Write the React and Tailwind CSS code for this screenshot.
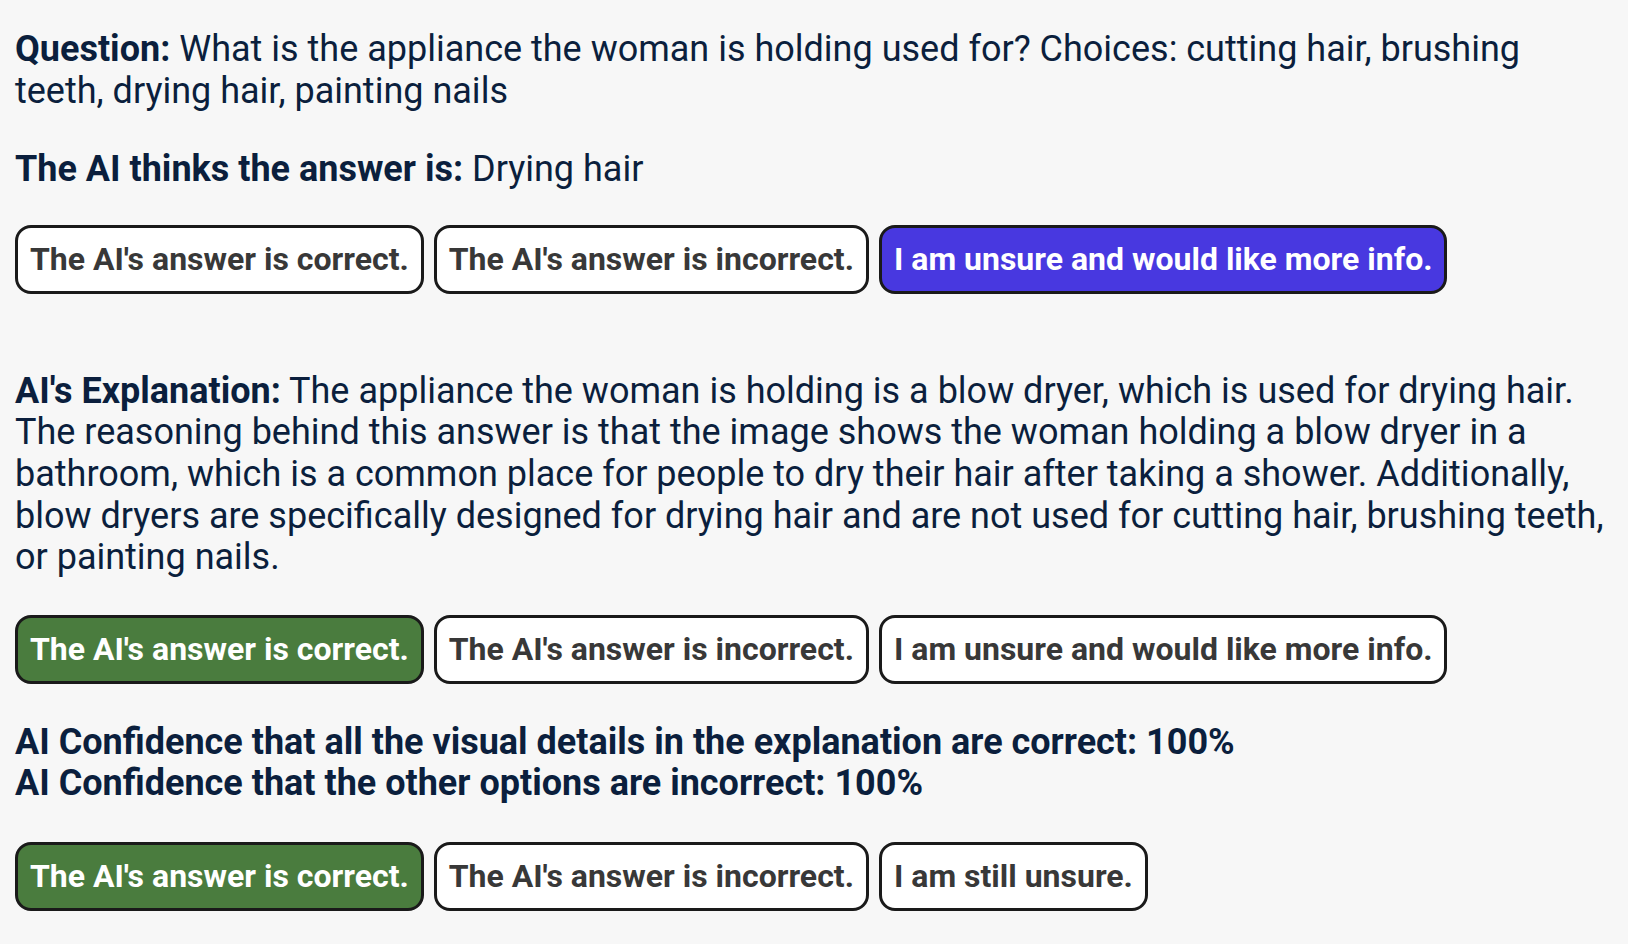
import React from 'react';

const btnBase =
    'h-[69px] flex items-center px-[12px] border-[3px] border-[#1a1a1a] rounded-[16px] text-[32px] leading-normal font-bold whitespace-nowrap';

const Choice = ({ label, variant }) => {
    const look =
        variant === 'blue'
            ? 'bg-[#4838e0] text-white'
            : variant === 'green'
            ? 'bg-[#4a7c3e] text-white'
            : 'bg-white text-[#383838]';
    return <button className={`${btnBase} ${look}`}>{label}</button>;
};

const ChoiceRow = ({ items, className = '' }) => (
    <div className={`flex gap-[10px] ${className}`}>
        {items.map((item, i) => (
            <Choice key={i} label={item.label} variant={item.variant} />
        ))}
    </div>
);

export default function App() {
    return (
        <div
            className="min-h-screen bg-[#f7f7f7] text-[#0b1f3d] text-[36px] leading-[41.6px] px-[15px] pt-[29px]"
            style={{ fontFamily: 'Roboto, "Liberation Sans", sans-serif' }}
        >
            {/* Question */}
            <p>
                <span className="font-bold">Question:</span> What is the appliance the woman is holding used
                for? Choices: cutting hair, brushing teeth, drying hair, painting nails
            </p>

            <p className="mt-[37px]">
                <span className="font-bold">The AI thinks the answer is:</span> Drying hair
            </p>

            <ChoiceRow
                className="mt-[34px]"
                items={[
                    { label: "The AI's answer is correct." },
                    { label: "The AI's answer is incorrect." },
                    { label: 'I am unsure and would like more info.', variant: 'blue' },
                ]}
            />

            {/* Explanation */}
            <p className="mt-[77px]">
                <span className="font-bold">AI's Explanation:</span> The appliance the woman is holding is a
                blow dryer, which is used for drying hair. The reasoning behind this answer is that the image
                shows the woman holding a blow dryer in a bathroom, which is a common place for people to dry
                their hair after taking a shower. Additionally, blow dryers are specifically designed for drying
                hair and are not used for cutting hair, brushing teeth, or painting nails.
            </p>

            <ChoiceRow
                className="mt-[36px]"
                items={[
                    { label: "The AI's answer is correct.", variant: 'green' },
                    { label: "The AI's answer is incorrect." },
                    { label: 'I am unsure and would like more info.' },
                ]}
            />

            {/* Confidence */}
            <div className="mt-[38px] font-bold">
                <p>AI Confidence that all the visual details in the explanation are correct: 100%</p>
                <p>AI Confidence that the other options are incorrect: 100%</p>
            </div>

            <ChoiceRow
                className="mt-[37px]"
                items={[
                    { label: "The AI's answer is correct.", variant: 'green' },
                    { label: "The AI's answer is incorrect." },
                    { label: 'I am still unsure.' },
                ]}
            />
        </div>
    );
}
